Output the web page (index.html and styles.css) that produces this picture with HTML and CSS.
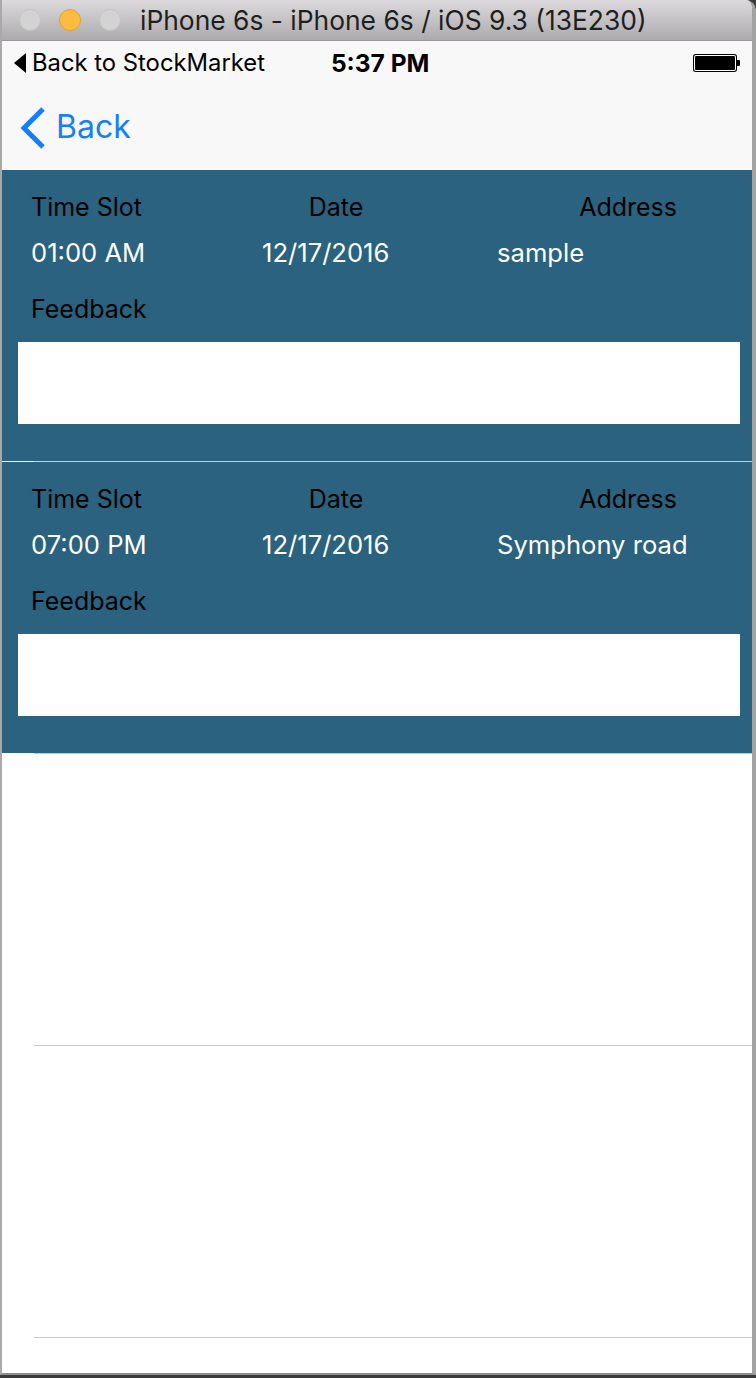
FILE: index.html
```html
<!DOCTYPE html>
<html>
<head>
<meta charset="utf-8">
<link rel="stylesheet" href="styles.css">
</head>
<body>
<div class="window">
  <div class="titlebar">
    <div class="lights">
      <span class="light gray"></span>
      <span class="light orange"></span>
      <span class="light gray"></span>
    </div>
    <div class="title">iPhone 6s - iPhone 6s / iOS 9.3 (13E230)</div>
  </div>
  <div class="screen">
    <div class="statusbar">
      <div class="sb-left"><span class="tri"></span><span>Back to StockMarket</span></div>
      <div class="sb-time">5:37 PM</div>
      <div class="battery"><span class="bat-body"></span><span class="bat-nub"></span></div>
    </div>
    <div class="navbar">
      <svg class="chev" width="30" height="44" viewBox="0 0 30 44"><path d="M25 3 L6 22 L25 41" fill="none" stroke="#147efb" stroke-width="5" stroke-linecap="butt" stroke-linejoin="miter"/></svg>
      <span class="back">Back</span>
    </div>
    <div class="list">
      <div class="card">
        <div class="labels"><span class="l1">Time Slot</span><span class="l2">Date</span><span class="l3">Address</span></div>
        <div class="values"><span>01:00 AM</span><span>12/17/2016</span><span>sample</span></div>
        <div class="fb">Feedback</div>
        <div class="fbox"></div>
      </div>
      <div class="sep"></div>
      <div class="card">
        <div class="labels"><span class="l1">Time Slot</span><span class="l2">Date</span><span class="l3">Address</span></div>
        <div class="values"><span>07:00 PM</span><span>12/17/2016</span><span>Symphony road</span></div>
        <div class="fb">Feedback</div>
        <div class="fbox"></div>
      </div>
      <div class="sep white"></div>
      <div class="empty"></div>
      <div class="sep white"></div>
      <div class="empty"></div>
      <div class="sep white"></div>
      <div class="rest"></div>
    </div>
  </div>
</div>
</body>
</html>
```

FILE: styles.css
```css
html, body {
  margin: 0;
  padding: 0;
}
body {
  background: #3a3a3a;
  width: 756px;
  height: 1378px;
  overflow: hidden;
  font-family: Inter, "Open Sans", "Liberation Sans", sans-serif;
}
.window {
  width: 750px;
  height: 1373px;
  border-left: 2px solid #a9a9a9;
  border-right: 4px solid #a3a3a3;
  border-bottom: 2px solid #8f8f8f;
  border-top-right-radius: 10px;
  background: #ffffff;
  overflow: hidden;
}
.titlebar {
  height: 41px;
  background: linear-gradient(#dcdadc, #acaaac);
  border-bottom: 1px solid #9a989a;
  box-sizing: border-box;
  display: flex;
  align-items: center;
  margin-left: -2px;
  margin-right: -4px;
  padding-left: 19px;
}
.lights {
  display: flex;
  gap: 18px;
}
.light {
  width: 22px;
  height: 22px;
  border-radius: 50%;
  box-sizing: border-box;
}
.light.gray {
  background: #d3d3d3;
  border: 1px solid #c5c5c5;
}
.light.orange {
  background: #fdbc40;
  border: 1px solid #dea236;
}
.title {
  margin-left: 19px;
  font-size: 26.4px;
  color: #1f1f1f;
}
.screen {
  background: #ffffff;
}
.statusbar {
  height: 43px;
  background: #f8f8f8;
  display: flex;
  align-items: center;
  font-size: 23.8px;
  color: #000;
}
.sb-left {
  display: flex;
  align-items: center;
  padding-left: 12px;
  gap: 6px;
}
.tri {
  width: 0;
  height: 0;
  border-top: 10px solid transparent;
  border-bottom: 10px solid transparent;
  border-right: 12px solid #000;
}
.sb-time {
  margin-left: 66px;
  font-weight: 700;
  font-size: 24.5px;
}
.battery {
  margin-left: auto;
  margin-right: 12px;
  display: flex;
  align-items: center;
}
.bat-body {
  width: 44px;
  height: 18px;
  box-sizing: border-box;
  background: #000;
  border-radius: 3px;
  box-shadow: inset 0 0 0 1px #000, inset 0 0 0 2px #fff;
}
.bat-nub {
  width: 3px;
  height: 6px;
  background: #000;
  border-radius: 0 1px 1px 0;
}
.navbar {
  height: 86px;
  background: #f8f8f8;
  display: flex;
  align-items: center;
  padding-left: 16px;
  gap: 8px;
}
.chev {
  display: block;
  margin-top: 1px;
}
.back {
  color: #147efb;
  font-size: 32px;
  margin-top: -2px;
}
.card {
  height: 291px;
  background: #2a627f;
  box-sizing: border-box;
  padding-top: 22px;
  font-size: 25px;
}
.labels {
  display: grid;
  grid-template-columns: 200px 210px 236px;
  padding-left: 29px;
  line-height: 30px;
  color: #000;
}
.labels .l2 {
  text-align: center;
}
.labels .l3 {
  text-align: right;
}
.values {
  display: grid;
  grid-template-columns: 231px 235px 1fr;
  padding-left: 29px;
  margin-top: 16px;
  line-height: 30px;
  color: #fff;
  font-size: 25.6px;
}
.fb {
  padding-left: 29px;
  margin-top: 26px;
  line-height: 30px;
  color: #000;
}
.fbox {
  margin: 18px 12px 0 16px;
  height: 82px;
  background: #fff;
}
.sep {
  height: 1px;
  background: linear-gradient(to right, #f2f4f5 0, #f2f4f5 32px, #c9cfd3 32px);
}
.sep.white {
  background: linear-gradient(to right, #ffffff 0, #ffffff 32px, #c8c8c8 32px);
}
.empty {
  height: 291px;
  background: #fff;
}
.rest {
  height: 40px;
  background: #fff;
}
```
